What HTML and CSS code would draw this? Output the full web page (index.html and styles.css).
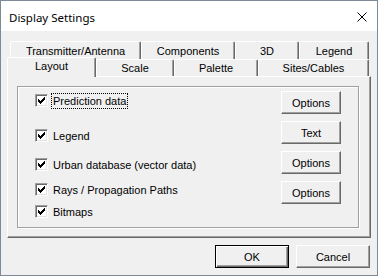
FILE: index.html
```html
<!DOCTYPE html>
<html lang="en">
<head>
    <meta charset="UTF-8">
    <title>Display Settings</title>
    <link rel="stylesheet" href="styles.css">
</head>
<body>

    <div class="window">
        <!-- Заголовок окна -->
        <div class="titlebar">
            <span class="title">Display Settings</span>
            <svg class="close" width="10" height="10" viewBox="0 0 10 10">
                <path d="M0.5 0.5L9.5 9.5M9.5 0.5L0.5 9.5" stroke="#000" stroke-width="1" fill="none"/>
            </svg>
        </div>

        <div class="content">
            <!-- Вкладки -->
            <div class="tab-row back">
                <div class="tab w-trans">Transmitter/Antenna</div>
                <div class="tab w-comp">Components</div>
                <div class="tab w-3d">3D</div>
                <div class="tab w-legend">Legend</div>
            </div>
            <div class="tab-row front">
                <div class="tab active w-layout">Layout</div>
                <div class="tab w-scale">Scale</div>
                <div class="tab w-palette">Palette</div>
                <div class="tab w-sites">Sites/Cables</div>
            </div>

            <div class="panel">
                <div class="group">
                    <div class="checks">
                        <label class="check-row r1">
                            <span class="box"><svg width="7" height="7" viewBox="0 0 7 7"><path d="M0 2v3l2 2l5-5v-3l-5 5z" fill="#000"/></svg></span>
                            <span class="focus">Prediction data</span>
                        </label>
                        <label class="check-row r2">
                            <span class="box"><svg width="7" height="7" viewBox="0 0 7 7"><path d="M0 2v3l2 2l5-5v-3l-5 5z" fill="#000"/></svg></span>
                            <span class="text">Legend</span>
                        </label>
                        <label class="check-row r3">
                            <span class="box"><svg width="7" height="7" viewBox="0 0 7 7"><path d="M0 2v3l2 2l5-5v-3l-5 5z" fill="#000"/></svg></span>
                            <span class="text">Urban database (vector data)</span>
                        </label>
                        <label class="check-row r4">
                            <span class="box"><svg width="7" height="7" viewBox="0 0 7 7"><path d="M0 2v3l2 2l5-5v-3l-5 5z" fill="#000"/></svg></span>
                            <span class="text">Rays / Propagation Paths</span>
                        </label>
                        <label class="check-row r5">
                            <span class="box"><svg width="7" height="7" viewBox="0 0 7 7"><path d="M0 2v3l2 2l5-5v-3l-5 5z" fill="#000"/></svg></span>
                            <span class="text">Bitmaps</span>
                        </label>
                    </div>
                    <div class="side-buttons">
                        <button class="btn">Options</button>
                        <button class="btn">Text</button>
                        <button class="btn">Options</button>
                        <button class="btn">Options</button>
                    </div>
                </div>
            </div>

            <!-- Кнопки диалога -->
            <div class="footer">
                <button class="btn wide default">OK</button>
                <button class="btn wide">Cancel</button>
            </div>
        </div>
    </div>

</body>
</html>
```

FILE: styles.css
```css
body {
    margin: 0;
    padding: 0;
    background-color: #f0f0f0;
}

.window {
    width: 378px;
    height: 276px;
    box-sizing: border-box;
    border: 1px solid #7e8a97;
    background-color: #f0f0f0;
    font-family: "Liberation Sans", Arial, sans-serif;
    font-size: 11px;
    color: #000;
}

/* Заголовок */
.titlebar {
    height: 30px;
    background-color: #fff;
    display: flex;
    align-items: center;
    justify-content: space-between;
    padding: 0 10px 0 8px;
}

.title {
    font-family: "Noto Sans", sans-serif;
    font-size: 11.5px;
    margin-top: 2px;
}

.close {
    display: block;
    margin-top: 1px;
}

.content {
    padding: 10px 6px 0 6px;
}

/* Вкладки */
.tab-row {
    display: flex;
    align-items: flex-end;
}

.tab-row.back {
    height: 18px;
    padding-left: 3px;
}

.tab-row.front {
    height: 17px;
}

.tab {
    box-sizing: border-box;
    height: 100%;
    background-color: #f0f0f0;
    border-top: 1px solid #fff;
    border-left: 1px solid #fff;
    border-right: 1px solid #696969;
    box-shadow: inset -1px 0 #a0a0a0;
    border-radius: 2px 2px 0 0;
    display: flex;
    align-items: center;
    justify-content: center;
}

.tab.active {
    height: 20px;
    margin-bottom: -1px;
    padding-bottom: 3px;
    position: relative;
    z-index: 1;
}

.w-trans { width: 131px; }
.w-comp { width: 94px; }
.w-3d { width: 64px; }
.w-legend { width: 70px; }
.w-layout { width: 89px; }
.w-scale { width: 78px; }
.w-palette { width: 84px; }
.w-sites { width: 111px; }

/* Панель */
.panel {
    box-sizing: border-box;
    width: 364px;
    height: 162px;
    border-top: 1px solid #fff;
    border-left: 1px solid #fff;
    border-right: 1px solid #696969;
    border-bottom: 1px solid #696969;
    box-shadow: inset -1px -1px #a0a0a0;
    padding: 9px 0 0 9px;
}

.group {
    box-sizing: border-box;
    width: 342px;
    height: 142px;
    border: 1px solid #a0a0a0;
    box-shadow: inset 1px 1px #fff, 1px 1px #fff;
    display: flex;
    justify-content: space-between;
    padding: 0 17px 0 17px;
}

.checks {
    display: flex;
    flex-direction: column;
}

.check-row {
    display: flex;
    align-items: center;
    height: 17px;
}

.r1 { margin-top: 5px; }
.r2 { margin-top: 18px; }
.r3 { margin-top: 12px; }
.r4 { margin-top: 8px; }
.r5 { margin-top: 5px; }

.box {
    box-sizing: border-box;
    width: 13px;
    height: 13px;
    background-color: #fff;
    border-top: 1px solid #a0a0a0;
    border-left: 1px solid #a0a0a0;
    border-right: 1px solid #fff;
    border-bottom: 1px solid #fff;
    box-shadow: inset 1px 1px #696969, inset -1px -1px #e3e3e3;
    display: flex;
    align-items: center;
    justify-content: center;
}

.box svg {
    display: block;
    shape-rendering: crispEdges;
}

.text {
    margin-left: 5px;
}

.focus {
    margin-left: 3px;
    padding: 1px 1px;
    border: 1px dotted #000;
}

/* Кнопки */
.side-buttons {
    display: flex;
    flex-direction: column;
    padding-top: 4px;
    gap: 7px;
}

.btn {
    box-sizing: border-box;
    width: 60px;
    height: 23px;
    padding: 0;
    background-color: #f0f0f0;
    font-family: "Liberation Sans", Arial, sans-serif;
    font-size: 11px;
    color: #000;
    border-top: 1px solid #fff;
    border-left: 1px solid #fff;
    border-right: 1px solid #696969;
    border-bottom: 1px solid #696969;
    box-shadow: inset -1px -1px #a0a0a0;
}

.footer {
    display: flex;
    justify-content: flex-end;
    gap: 7px;
    padding: 7px 1px 0 0;
}

.btn.wide {
    width: 74px;
}

.btn.default {
    border: 1px solid #000;
    box-shadow: inset 1px 1px #fff, inset -1px -1px #696969, inset -2px -2px #a0a0a0;
}
```
